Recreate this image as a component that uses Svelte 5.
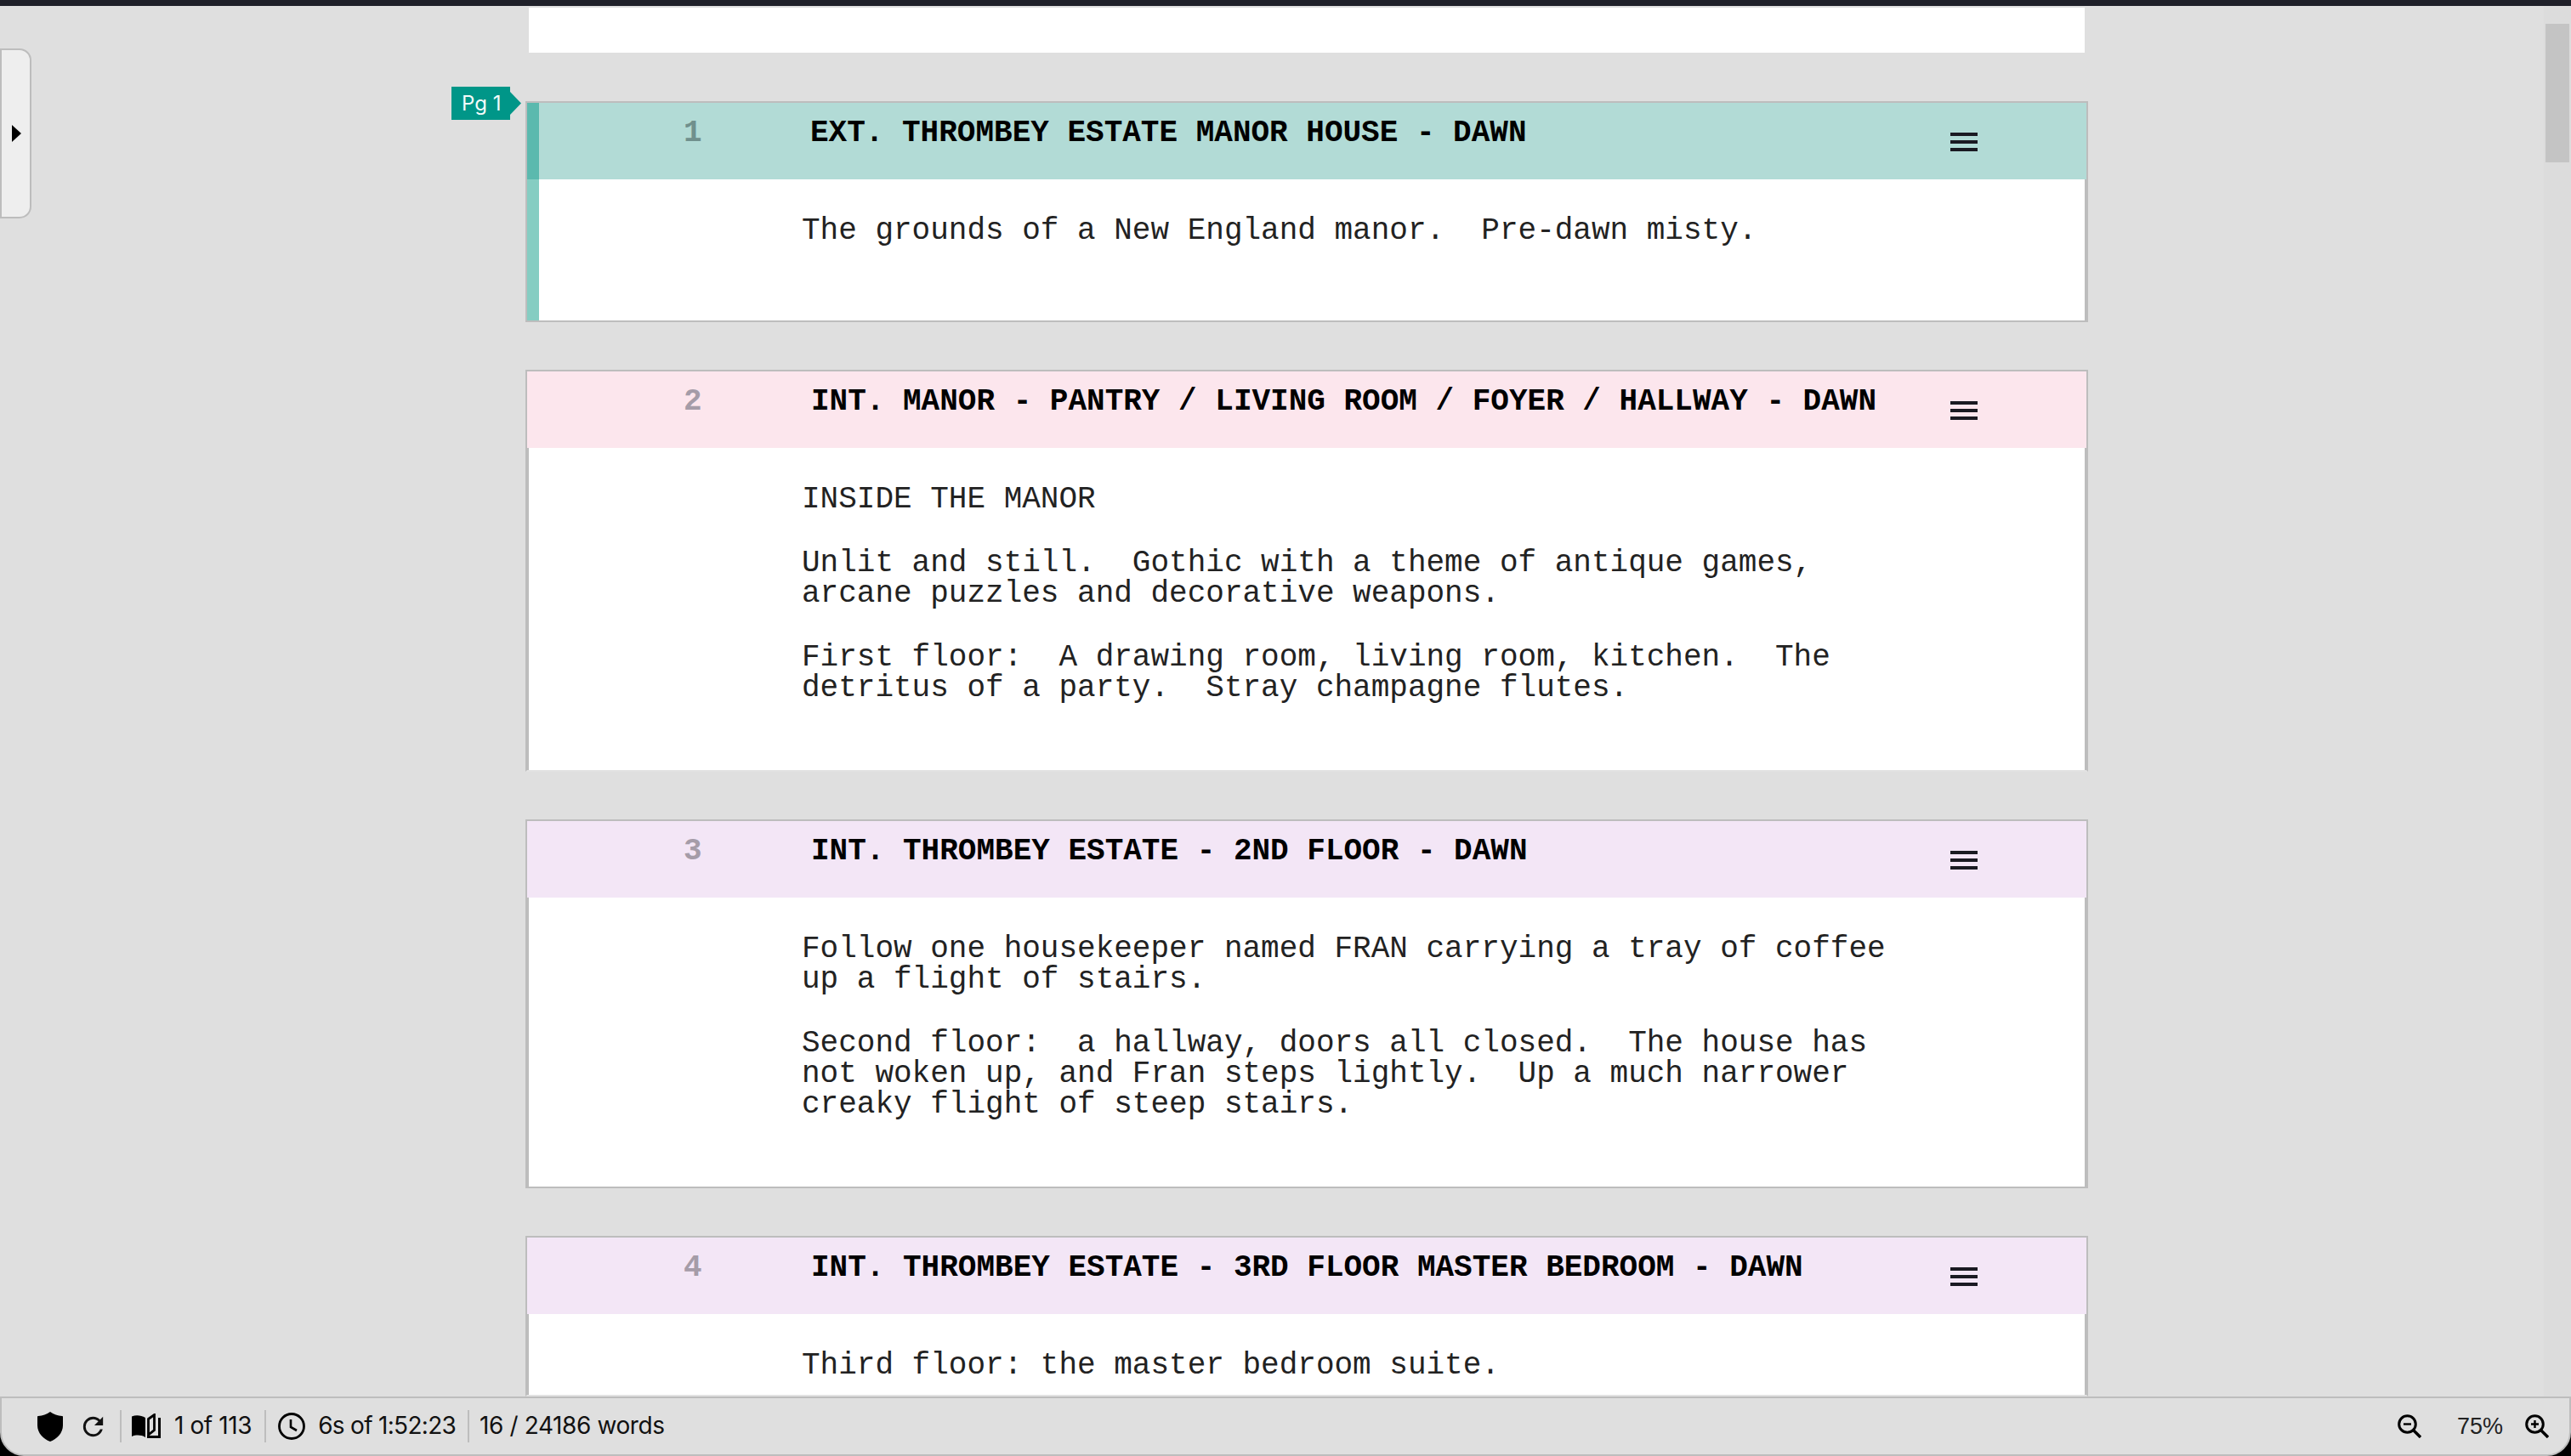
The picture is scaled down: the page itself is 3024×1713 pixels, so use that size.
<script>
  const scenes = [
    { n: 1, title: 'EXT. THROMBEY ESTATE MANOR HOUSE - DAWN', tone: 'teal', tag: 'Pg 1',
      paras: ['The grounds of a New England manor.  Pre-dawn misty.'] },
    { n: 2, title: 'INT. MANOR - PANTRY / LIVING ROOM / FOYER / HALLWAY - DAWN', tone: 'pink', open: true,
      paras: ['INSIDE THE MANOR', 'Unlit and still.  Gothic with a theme of antique games,\narcane puzzles and decorative weapons.', 'First floor:  A drawing room, living room, kitchen.  The\ndetritus of a party.  Stray champagne flutes.'] },
    { n: 3, title: 'INT. THROMBEY ESTATE - 2ND FLOOR - DAWN', tone: 'purple',
      paras: ['Follow one housekeeper named FRAN carrying a tray of coffee\nup a flight of stairs.', 'Second floor:  a hallway, doors all closed.  The house has\nnot woken up, and Fran steps lightly.  Up a much narrower\ncreaky flight of steep stairs.'] },
    { n: 4, title: 'INT. THROMBEY ESTATE - 3RD FLOOR MASTER BEDROOM - DAWN', tone: 'purple', open: true, cut: true,
      paras: ['Third floor: the master bedroom suite.'] }
  ];
</script>

<div class="app">
  <div class="topbar"></div>
  <div class="main">
    <div class="scroller">
      <div class="prev"></div>
      {#each scenes as s}
        <section class="card {s.tone}" class:open={s.open} class:cut={s.cut}>
          {#if s.tag}
            <div class="tag"><span>{s.tag}</span></div>
          {/if}
          <header class="head">
            <span class="num">{s.n}</span>
            <h2 class="title">{s.title}</h2>
            <span class="menu"><i></i><i></i><i></i></span>
          </header>
          <div class="body">
            {#each s.paras as p}
              <p>{p}</p>
            {/each}
          </div>
        </section>
      {/each}
    </div>
    <div class="track"><div class="thumb"></div></div>
    <button class="drawer" aria-label="Open panel">
      <svg width="11" height="20" viewBox="0 0 11 20"><path d="M0 0L11 10L0 20Z" fill="#000"/></svg>
    </button>
  </div>
  <footer class="status">
    <svg class="shield" width="30" height="35" viewBox="0 0 30 35"><path d="M15 0C19 3 24 4.500 29 5C29.700 5 30 5.500 30 6V16C30 25 23 32 15 35C7 32 0 25 0 16V6C0 5.500 .3 5 1 5C6 4.500 11 3 15 0Z" fill="#000"/></svg>
    <svg class="refresh" width="35" height="35" viewBox="0 0 24 24"><path d="M17.650 6.350C16.200 4.900 14.210 4 12 4A8 8 0 0 0 4 12A8 8 0 0 0 12 20C15.730 20 18.840 17.450 19.730 14H17.650C16.830 16.330 14.610 18 12 18A6 6 0 0 1 6 12A6 6 0 0 1 12 6C13.660 6 15.140 6.690 16.220 7.780L13 11H20V4L17.650 6.350Z" fill="#111"/></svg>
    <span class="sep first"></span>
    <svg class="book" width="34" height="30" viewBox="0 0 34 30">
      <path d="M0 3.500C5 1.500 11 2 16 5V28C11 25 5 25 0 27Z" fill="#000"/>
      <path d="M19.500 6.500L26.500 1.500V19.500L19.500 25Z" fill="none" stroke="#000" stroke-width="2.800"/>
      <path d="M32.500 5V27.500H18" fill="none" stroke="#000" stroke-width="3"/>
    </svg>
    <span class="txt pages">1 of 113</span>
    <span class="sep mid"></span>
    <svg class="clock" width="32" height="32" viewBox="0 0 32 32">
      <circle cx="16" cy="16" r="14.500" fill="none" stroke="#000" stroke-width="2.800"/>
      <path d="M15 8V17L22 21" fill="none" stroke="#000" stroke-width="2.600"/>
    </svg>
    <span class="txt time">6s of 1:52:23</span>
    <span class="sep last"></span>
    <span class="txt words">16 / 24186 words</span>
    <span class="spacer"></span>
    <svg class="zoom-out" width="28" height="28" viewBox="0 0 28 28">
      <circle cx="11.500" cy="11.500" r="9.800" fill="none" stroke="#000" stroke-width="3"/>
      <path d="M18.500 18.500L27 27" stroke="#000" stroke-width="3.400"/>
      <path d="M7 11.500H16" stroke="#000" stroke-width="2.400"/>
    </svg>
    <span class="pct">75%</span>
    <svg class="zoom-in" width="28" height="28" viewBox="0 0 28 28">
      <circle cx="11.500" cy="11.500" r="9.800" fill="none" stroke="#000" stroke-width="3"/>
      <path d="M18.500 18.500L27 27" stroke="#000" stroke-width="3.400"/>
      <path d="M7 11.500H16M11.500 7V16" stroke="#000" stroke-width="2.400"/>
    </svg>
  </footer>
</div>

<style>
  :global(body) { margin: 0; background: #000; }
  .app {
    width: 3024px;
    height: 1713px;
    display: flex;
    flex-direction: column;
    overflow: hidden;
    background: #000;
  }
  .topbar { height: 7px; flex: none; background: #1f2029; }
  .main {
    position: relative;
    flex: 1;
    min-height: 0;
    display: flex;
    background: #dfdfdf;
  }
  .scroller {
    flex: 1;
    min-width: 0;
    overflow: hidden;
    padding: 2px 0 0 618px;
    display: flex;
    flex-direction: column;
    gap: 56px;
  }
  .prev {
    flex: none;
    width: 1830px;
    height: 53px;
    margin: 0 0 1px 4px;
    background: #fff;
  }
  .card {
    position: relative;
    flex: none;
    width: 1838px;
    box-sizing: border-box;
    display: flex;
    flex-direction: column;
    border: 2px solid #bdbdbd;
    background: #fff;
  }
  .card.teal { min-height: 260px; }
  .card.open { border-bottom-color: #e2e2e2; }
  .card.cut { height: 189px; overflow: hidden; }
  .head {
    flex: none;
    height: 90px;
    display: flex;
    align-items: flex-start;
    font-family: "Liberation Mono", monospace;
    font-size: 36px;
    line-height: 36px;
    font-weight: 700;
  }
  .teal .head { background: #b2dbd6; box-shadow: inset 14px 0 0 #5bb9ae; }
  .pink .head { background: #fce6ed; }
  .purple .head { background: #f3e6f6; }
  .num {
    width: 334px;
    flex: none;
    box-sizing: border-box;
    padding: 18px 0 0 184px;
    color: #a59ca8;
  }
  .teal .num { width: 333px; color: #70908d; }
  .title {
    margin: 0;
    padding-top: 18px;
    flex: 1;
    font: inherit;
    color: #000;
    white-space: pre;
  }
  .menu {
    display: flex;
    flex-direction: column;
    gap: 5px;
    width: 32px;
    margin: 35px 128px 0 0;
  }
  .menu i { display: block; height: 4px; background: #1a1a22; }
  .body {
    flex: 1;
    display: flex;
    flex-direction: column;
    gap: 39px;
    padding: 43px 0 78px 321px;
    border-left: 2px solid #bdbdbd;
    border-right: 2px solid #bdbdbd;
    font-family: "Liberation Mono", monospace;
    font-size: 36px;
    line-height: 36px;
    color: #222;
  }
  .body p { margin: 0; white-space: pre; }
  .teal .body { border-left: 14px solid #85cdc2; padding-left: 309px; }
  .tag {
    position: absolute;
    left: -89px;
    top: -19px;
    width: 82px;
    height: 39px;
    box-sizing: border-box;
    padding-left: 12px;
    background: #009688;
    clip-path: polygon(0 0, 69px 0, 69px 6px, 82px 19.500px, 69px 33px, 69px 39px, 0 39px);
    color: #f4fbfa;
    font: 400 24px/39px Inter, sans-serif;
  }
  .track { width: 32px; flex: none; background: #dcdcdc; }
  .thumb { width: 28px; height: 163px; margin: 21px 0 0 2px; background: #c4c4c4; }
  .drawer {
    position: absolute;
    left: 0;
    top: 50px;
    width: 37px;
    height: 200px;
    box-sizing: border-box;
    padding: 0 0 0 12px;
    display: flex;
    align-items: center;
    border: 2px solid #bdbdbd;
    border-radius: 0 14px 14px 0;
    background: #eee;
  }
  .status {
    flex: none;
    height: 70px;
    box-sizing: border-box;
    display: flex;
    align-items: center;
    padding-left: 42px;
    background: #dfdfdf;
    border: 2px solid #bdbdbd;
    border-radius: 0 0 28px 28px;
  }
  .status svg { flex: none; }
  .refresh { margin-left: 18px; }
  .sep { width: 2px; height: 38px; background: #bdbdbd; flex: none; }
  .sep.first { margin: 0 12px 0 14px; }
  .sep.mid { margin: 0 14px 0 15px; }
  .sep.last { margin: 0 12px 0 14px; }
  .txt { font: 400 28px/1 Inter, sans-serif; letter-spacing: -0.4px; color: #111; white-space: pre; margin-bottom: 2px; }
  .pages { margin-left: 16px; }
  .time { margin-left: 15px; letter-spacing: -0.7px; }
  .spacer { flex: 1; }
  .pct { margin: 0 26px 0 42px; font: 400 27px/1 "Liberation Sans", sans-serif; color: #222; }
  .zoom-in { margin-right: 24px; }
</style>
